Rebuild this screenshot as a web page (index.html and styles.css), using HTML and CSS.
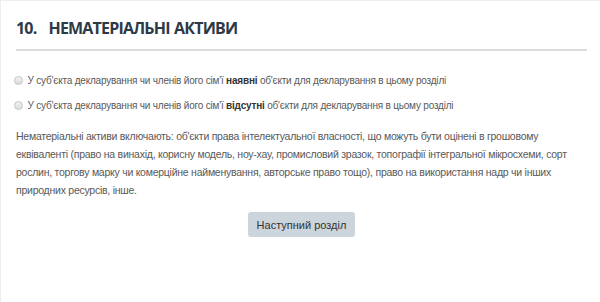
FILE: index.html
```html
<!DOCTYPE html>
<html lang="uk">
<head>
    <meta charset="UTF-8">
    <meta name="viewport" content="width=device-width, initial-scale=1.0">
    <title>Нематеріальні активи</title>
    <link rel="stylesheet" href="styles.css">
</head>
<body>
    <div class="panel">
        <h1 class="section-title"><span class="section-num">10.</span>НЕМАТЕРІАЛЬНІ АКТИВИ</h1>
        <form class="choice">
            <label class="radio-option"><input type="radio" name="has"> У суб'єкта декларування чи членів його сім'ї <b>наявні</b> об'єкти для декларування в цьому розділі</label>
            <label class="radio-option"><input type="radio" name="has"> У суб'єкта декларування чи членів його сім'ї <b>відсутні</b> об'єкти для декларування в цьому розділі</label>
        </form>
        <p class="note">Нематеріальні активи включають: об'єкти права інтелектуальної власності, що можуть бути оцінені в грошовому еквіваленті (право на винахід, корисну модель, ноу-хау, промисловий зразок, топографії інтегральної мікросхеми, сорт рослин, торгову марку чи комерційне найменування, авторське право тощо), право на використання надр чи інших природних ресурсів, інше.</p>
        <div class="actions">
            <button type="button" class="button">Наступний розділ</button>
        </div>
    </div>
</body>
</html>
```

FILE: styles.css
```css
body {
    margin: 0;
    padding: 1px 0 0 1px;
    background-color: #eeeeee;
    font-family: "Liberation Sans", Arial, sans-serif;
    font-size: 11px;
    color: #595959;
}
.panel {
    background-color: #fff;
    min-height: 301px;
    padding: 15px 13px 0 15px;
    box-sizing: border-box;
}
.section-title {
    font-family: "Open Sans", sans-serif;
    font-size: 16px;
    font-weight: 700;
    letter-spacing: -0.8px;
    word-spacing: 1px;
    color: #2e3947;
    margin: 0;
    padding: 0 0 9px 0;
    line-height: 24px;
    border-bottom: 2px solid #dddddd;
}
.section-num {
    margin-right: 12px;
}
.choice {
    margin-top: 17px;
}
.radio-option {
    display: flex;
    align-items: center;
    height: 25px;
    line-height: 25px;
    font-size: 10px;
    letter-spacing: -0.2px;
    white-space: pre;
}
.radio-option input {
    appearance: none;
    width: 9px;
    height: 9px;
    margin: 0 2px 0 -2px;
    border: 1px solid #c4c4c4;
    border-radius: 50%;
    background: linear-gradient(#f2f2f2, #dcdcdc);
    box-sizing: border-box;
}
.radio-option b {
    color: #333;
}
.note {
    font-size: 10.5px;
    line-height: 18px;
    margin: 9px 0 0 0;
    padding-right: 4px;
    letter-spacing: -0.25px;
}
.actions {
    text-align: center;
    margin-top: 13px;
}
.button {
    font-family: "Liberation Sans", Arial, sans-serif;
    font-size: 11px;
    color: #333;
    background-color: #cdd5dc;
    border: none;
    border-radius: 3px;
    padding: 6px 9px;
    height: 25px;
    cursor: pointer;
}
.button:hover {
    background-color: #bcc6cf;
}
```
